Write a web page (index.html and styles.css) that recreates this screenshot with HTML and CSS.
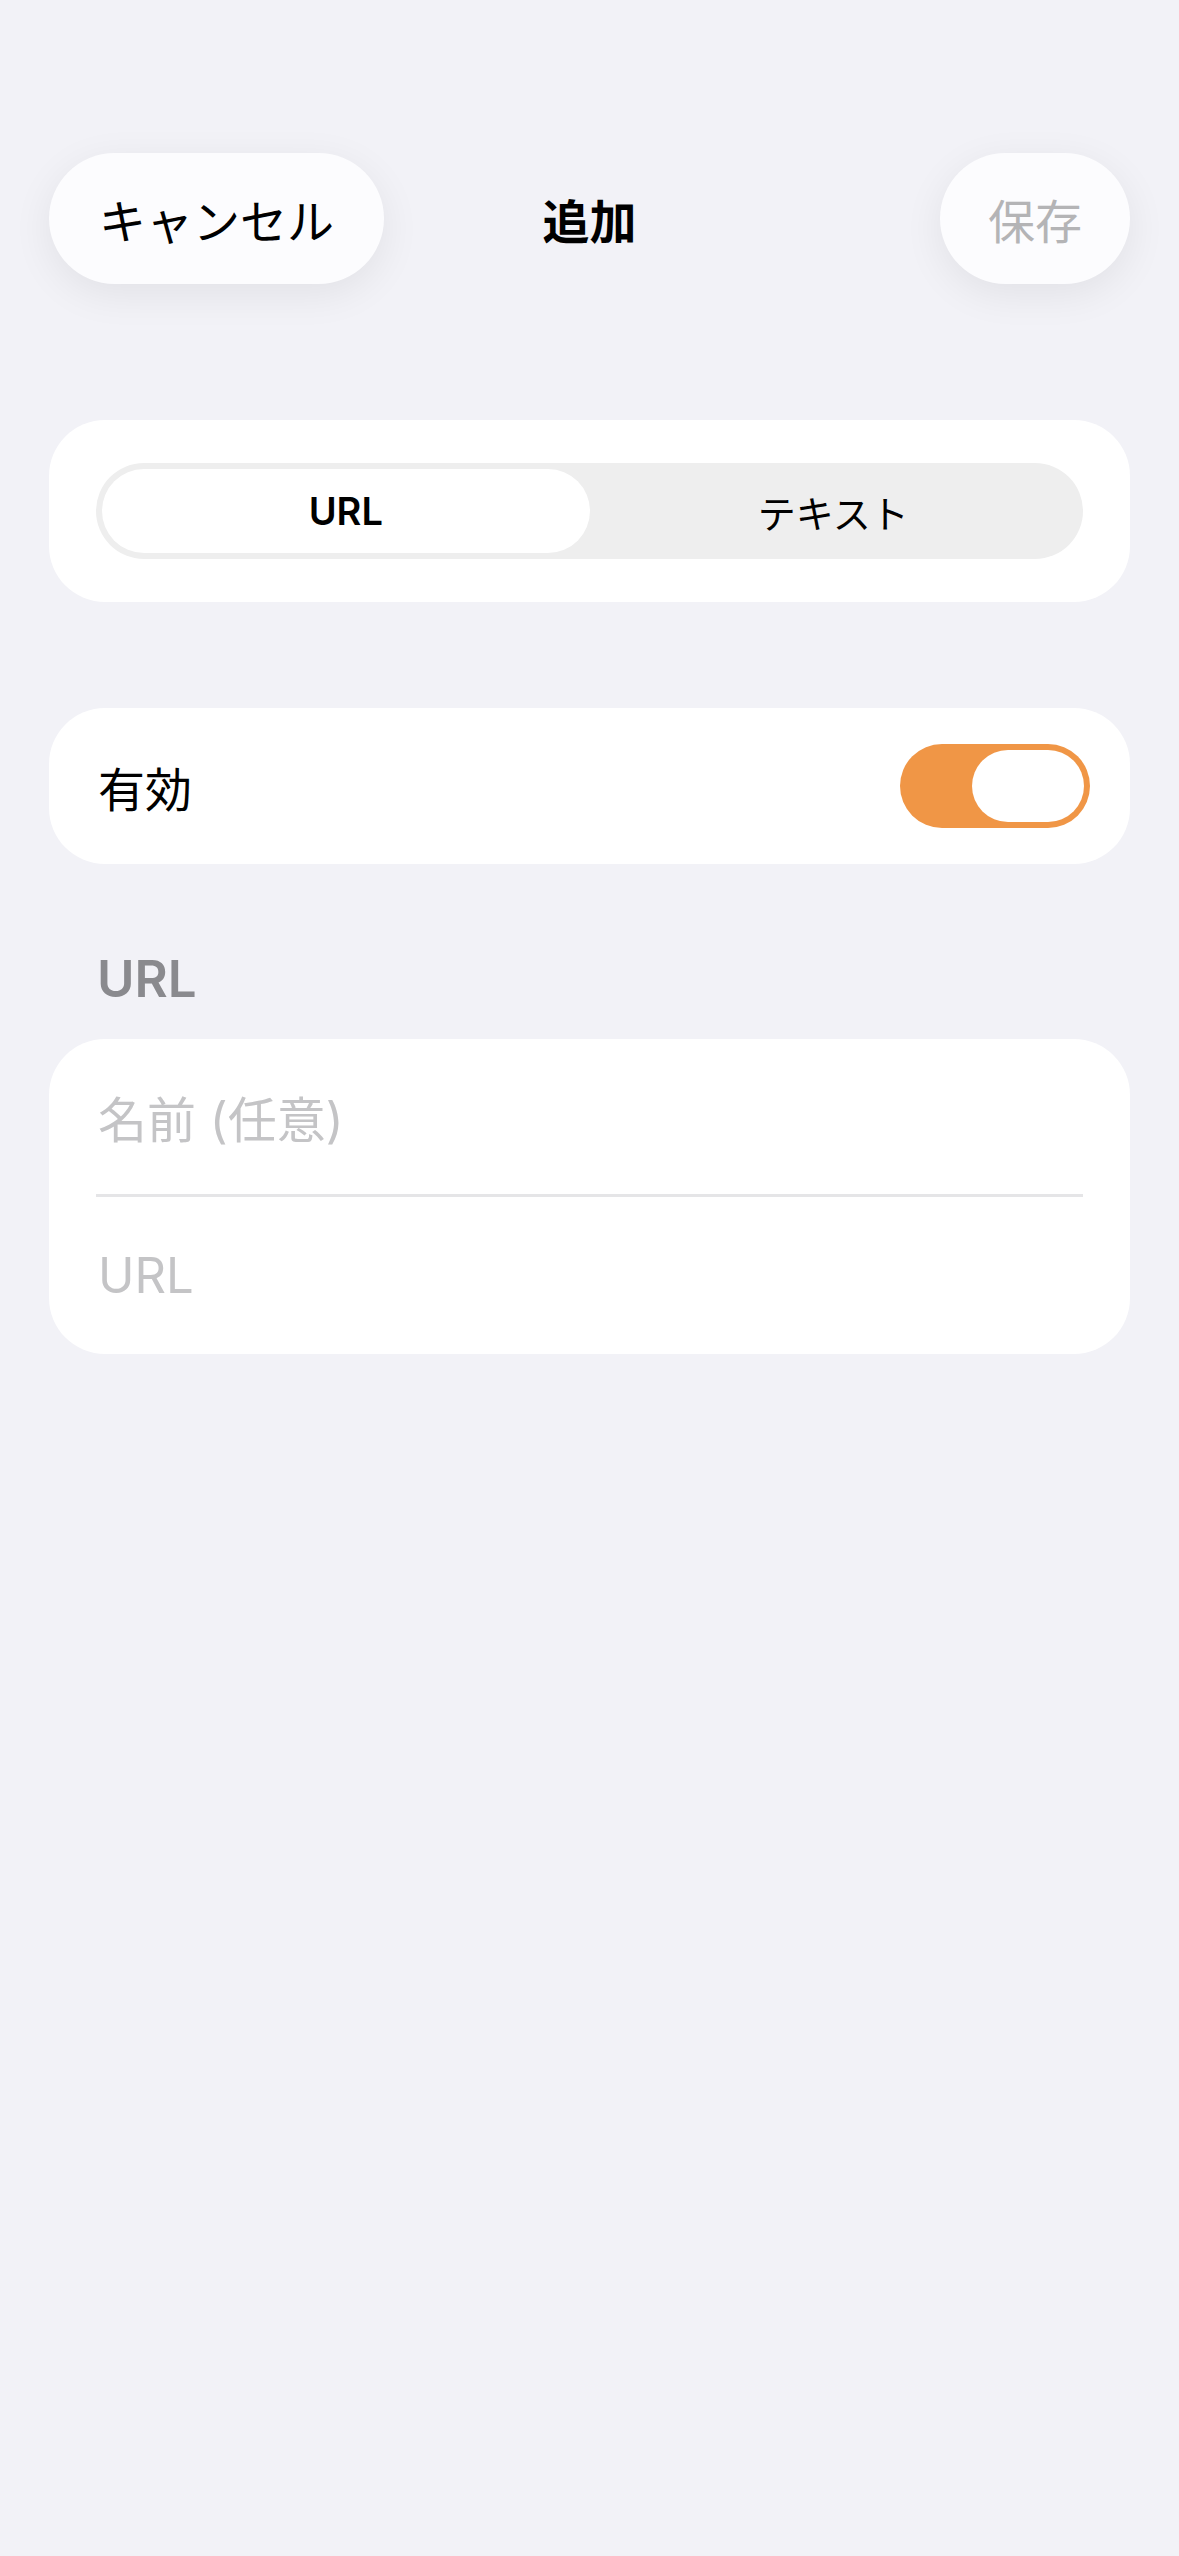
FILE: index.html
```html
<!DOCTYPE html>
<html lang="ja">
<head>
    <meta charset="UTF-8">
    <meta name="viewport" content="width=device-width, initial-scale=1.0">
    <title>追加</title>
    <link rel="stylesheet" href="styles.css">
</head>
<body>
    <div class="screen">
        <header class="nav">
            <button class="nav-btn cancel">キャンセル</button>
            <h1 class="nav-title">追加</h1>
            <button class="nav-btn save" disabled>保存</button>
        </header>

        <section class="card segment-card">
            <div class="segmented">
                <div class="seg-item active">URL</div>
                <div class="seg-item">テキスト</div>
            </div>
        </section>

        <section class="card toggle-card">
            <span class="row-label">有効</span>
            <div class="switch on"><div class="knob"></div></div>
        </section>

        <h2 class="section-header">URL</h2>
        <section class="card field-card">
            <div class="field"><span class="placeholder">名前 (任意)</span></div>
            <div class="divider"></div>
            <div class="field"><span class="placeholder">URL</span></div>
        </section>
    </div>
</body>
</html>
```

FILE: styles.css
```css
body { margin: 0; background: #f2f2f7; font-family: Inter, "Noto Sans CJK JP", sans-serif; color: #000; }
.screen { min-height: 2556px; padding-top: 153px; box-sizing: border-box; }

.nav { display: grid; grid-template-columns: 1fr auto 1fr; align-items: center; padding: 0 49px; height: 131px; }
.nav-btn { height: 131px; border: none; border-radius: 66px; background: #fcfcfe; box-shadow: 0 10px 40px rgba(0, 0, 0, 0.07); font-family: inherit; font-size: 47px; padding: 0 50px; }
.cancel { justify-self: start; color: #000; }
.save { justify-self: end; color: #b4b4b6; padding: 0 48px; }
.nav-title { margin: 0; font-size: 47px; font-weight: 700; }

.card { background: #fff; margin: 0 49px; border-radius: 56px; }

.segment-card { margin-top: 136px; padding: 43px 47px; }
.segmented { display: grid; grid-template-columns: 1fr 1fr; background: #eeeeee; border-radius: 48px; padding: 6px; height: 84px; }
.seg-item { display: flex; align-items: center; justify-content: center; font-size: 38px; border-radius: 42px; }
.seg-item.active { background: #fff; font-weight: 600; }

.toggle-card { margin-top: 106px; height: 156px; display: flex; align-items: center; justify-content: space-between; padding: 0 40px 0 49px; }
.row-label { font-size: 47px; }
.switch { width: 190px; height: 84px; border-radius: 42px; background: #f09646; display: flex; align-items: center; justify-content: flex-end; padding: 0 6px; box-sizing: border-box; }
.knob { width: 112px; height: 72px; border-radius: 36px; background: #fff; }

.section-header { margin: 85px 0 30px 97px; font-size: 51px; line-height: 60px; font-weight: 600; color: #8a8a8e; }

.field-card { overflow: hidden; }
.field { height: 155px; display: flex; align-items: center; padding: 0 49px; }
.field:last-child { height: 157px; }
.placeholder { font-size: 49px; color: #c4c4c6; }
.divider { height: 3px; background: #e5e5e7; margin: 0 47px; }
```
